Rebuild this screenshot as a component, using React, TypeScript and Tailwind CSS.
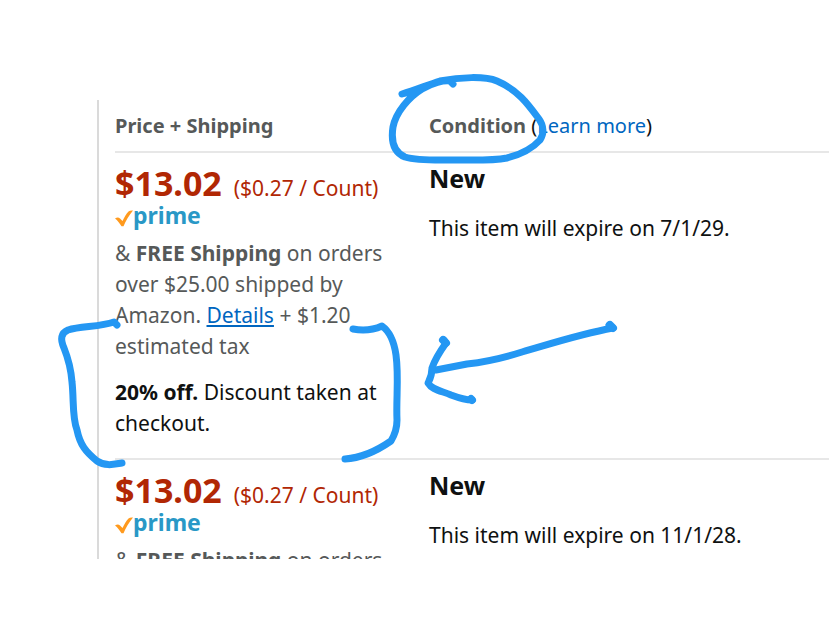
type Offer = {
  price: string;
  unitPrice: string;
  condition: string;
  expires: string;
};

const offers: Offer[] = [
  { price: "$13.02", unitPrice: "($0.27 / Count)", condition: "New", expires: "7/1/29" },
  { price: "$13.02", unitPrice: "($0.27 / Count)", condition: "New", expires: "11/1/28" },
];

function PrimeBadge() {
  return (
    <div className="flex h-7 items-center">
      <svg className="mt-1.5 h-[18px] w-[18px]" viewBox="0 0 18 18" aria-hidden="true">
        <path d="M0 9.500Q3 7.500 5 9.500L7.500 12C9.500 8 11 5 13.500 2.500Q15 1.200 18 1.500C14 6.500 11 11.500 8.500 17.200L6.500 17.200C4.500 14 2.500 11.500 0 9.500Z" fill="#ff9a1e" />
      </svg>
      <span className="text-[23px] leading-7 font-bold text-[#2998c6]">prime</span>
    </div>
  );
}

function OfferRow({ offer }: { offer: Offer }) {
  return (
    <tr className="border-b-2 border-[#e7e7e7] align-top">
      <td className="pt-3 pb-[19px]">
        <div className="flex h-9 items-baseline gap-3 leading-9 whitespace-nowrap text-[#b12704]">
          <span className="text-[34px] font-bold">{offer.price}</span>
          <span className="text-[21px]">{offer.unitPrice}</span>
        </div>
        <PrimeBadge />
        <p className="mt-[9px] w-[272px] text-[#565959]">
          &amp; <b>FREE Shipping</b> on orders over $25.00 shipped by Amazon.{" "}
          <a href="#details" className="text-[#0066c0] underline">
            Details
          </a>{" "}
          + $1.20 estimated tax
        </p>
        <p className="mt-[15px] w-[272px]">
          <b>20% off.</b> Discount taken at checkout.
        </p>
      </td>
      <td className="pt-[9px]">
        <h2 className="text-[25px] leading-8 font-bold">{offer.condition}</h2>
        <p className="mt-[19px]">This item will expire on {offer.expires}.</p>
      </td>
    </tr>
  );
}

// Hand-drawn marker strokes that lie over the offer list
function Markup() {
  return (
    <svg
      className="pointer-events-none absolute top-0 left-0"
      width="829"
      height="643"
      viewBox="0 0 829 643"
      fill="none"
      stroke="#2497f3"
      strokeWidth="7"
      strokeLinecap="round"
      strokeLinejoin="round"
      aria-hidden="true"
    >
      <path d="M402 94C416 90 427 85 440 81C460 77 485 76 497 81C518 90 528 104 539 119C544 126 544 134 540 140C531 150 519 155 507 158C491 161 470 160 455 160C437 160 418 161 405 157C393 152 391 140 393 127C396 112 409 97 422 89C432 83 444 80 450 81L453 84" />
      <path d="M117 325L114 322C100 327 81 326 68 330C61 333 60 339 64 348C68 358 71 369 72 382C74 400 72 417 77 430C80 445 86 452 97 461C106 467 115 464 122 463" />
      <path d="M353 329C363 331 373 330 382 326C389 331 394 341 396 355C399 377 396 399 397 420C397 428 394 436 391 441C378 450 362 458 345 459" />
      <path d="M609 325L613 328C580 334 550 344 522 352C500 359 485 362 467 364L436 370" />
      <path d="M444 340L446 343C441 350 435 359 432 368C432 376 430 379 428 383C432 390 442 391 451 395C459 398 465 400 472 400" />
      <path d="M443 340L446 343M610 325L613 328M471 399L472 400" strokeWidth="8" />
    </svg>
  );
}

export default function App() {
  return (
    <main className="relative flex h-screen flex-col overflow-hidden bg-white pt-25 pb-21 pl-[97px] font-['Noto_Sans',sans-serif] text-[21px] leading-[31px] text-[#0f1111]">
      <div className="min-h-0 flex-1 overflow-hidden border-l-2 border-[#dadada] pl-4">
        <table className="w-full table-fixed border-collapse text-left">
          <thead>
            <tr className="border-b-2 border-[#e7e7e7] text-[20px]">
              <th className="w-[314px] pt-2.5 pb-2.5 font-bold text-[#565959]">Price + Shipping</th>
              <th className="pt-2.5 pb-2.5 font-normal">
                <b className="text-[#565959]">Condition</b> (
                <a href="#learn-more" className="text-[#0066c0]">
                  Learn more
                </a>
                )
              </th>
            </tr>
          </thead>
          <tbody>
            {offers.map((offer) => (
              <OfferRow key={offer.expires} offer={offer} />
            ))}
          </tbody>
        </table>
      </div>
      <Markup />
    </main>
  );
}
